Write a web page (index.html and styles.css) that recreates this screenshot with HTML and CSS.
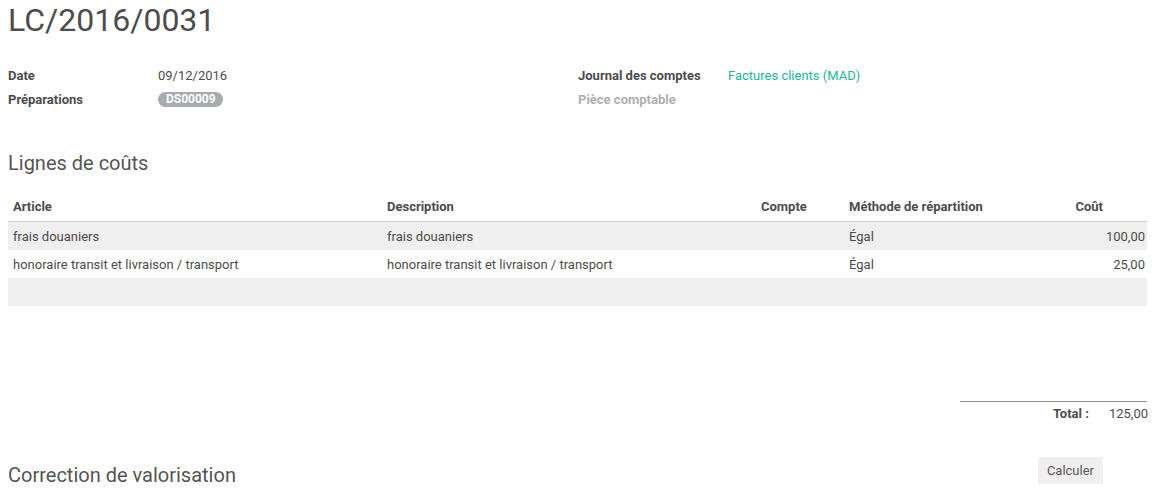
FILE: index.html
```html
<!DOCTYPE html>
<html>
<head>
<meta charset="utf-8">
<link rel="stylesheet" href="styles.css">
</head>
<body>
<div class="sheet">
  <h1 class="title">LC/2016/0031</h1>
  <div class="fields">
    <div class="group">
      <div class="field"><span class="label">Date</span><span class="value">09/12/2016</span></div>
      <div class="field"><span class="label">Préparations</span><span class="value"><span class="badge">DS00009</span></span></div>
    </div>
    <div class="group">
      <div class="field"><span class="label">Journal des comptes</span><span class="value link">Factures clients (MAD)</span></div>
      <div class="field"><span class="label muted">Pièce comptable</span><span class="value"></span></div>
    </div>
  </div>

  <h2 class="section">Lignes de coûts</h2>
  <table class="lines">
    <colgroup>
      <col class="c-article"><col class="c-desc"><col class="c-compte"><col class="c-meth"><col class="c-cout">
    </colgroup>
    <thead>
      <tr>
        <th>Article</th>
        <th>Description</th>
        <th class="th-compte">Compte</th>
        <th>Méthode de répartition</th>
        <th class="th-cout">Coût</th>
      </tr>
    </thead>
    <tbody>
      <tr class="odd">
        <td>frais douaniers</td>
        <td>frais douaniers</td>
        <td></td>
        <td>Égal</td>
        <td class="num">100,00</td>
      </tr>
      <tr>
        <td>honoraire transit et livraison / transport</td>
        <td>honoraire transit et livraison / transport</td>
        <td></td>
        <td>Égal</td>
        <td class="num">25,00</td>
      </tr>
      <tr class="odd empty">
        <td></td><td></td><td></td><td></td><td></td>
      </tr>
    </tbody>
  </table>

  <div class="totals">
    <div class="total-row"><span class="total-label">Total :</span><span class="total-value">125,00</span></div>
  </div>

  <div class="bottom">
    <h2 class="section">Correction de valorisation</h2>
    <button class="btn">Calculer</button>
  </div>
</div>
</body>
</html>
```
FILE: styles.css
```css
html, body {
  margin: 0;
  padding: 0;
  background: #fff;
}
body {
  font-family: Roboto, "Noto Sans", sans-serif;
  font-size: 13px;
  color: #4c4c4c;
  overflow: hidden;
}
.sheet {
  padding: 0 14px 0 8px;
}
.title {
  margin: 0;
  padding-top: 1px;
  font-size: 32px;
  font-weight: 400;
  line-height: 38px;
  color: #4c4c4c;
}
.fields {
  display: flex;
  margin-top: 24px;
}
.group {
  flex: 0 0 570px;
}
.field {
  display: flex;
  height: 24px;
  align-items: center;
}
.label {
  width: 150px;
  font-weight: 700;
  color: #4c4c4c;
}
.label.muted {
  color: #b0b0b0;
}
.value.link {
  color: #21b799;
}
.badge {
  display: inline-block;
  background: #a6abaf;
  color: #fff;
  font-weight: 700;
  font-size: 12px;
  line-height: 15px;
  padding: 0 7px 0 8px;
  border-radius: 8px;
}
.section {
  margin: 0;
  font-size: 20px;
  font-weight: 400;
  color: #555;
  line-height: 24px;
}
.fields + .section {
  margin-top: 40px;
}
.lines {
  width: 100%;
  margin-top: 17px;
  border-collapse: collapse;
  table-layout: fixed;
}
.c-article { width: 374px; }
.c-desc { width: 374px; }
.c-compte { width: 88px; }
.c-meth { width: 196px; }
.c-cout { width: auto; }
.lines th {
  text-align: left;
  font-weight: 700;
  padding: 0 5px;
  height: 29px;
  vertical-align: middle;
  border-bottom: 1px solid #cfcfcf;
  color: #4c4c4c;
}
.lines th.th-compte {
  text-align: right;
  padding-right: 38px;
}
.lines th.th-cout {
  text-align: right;
  padding-right: 44px;
}
.lines td {
  padding: 0 5px;
  height: 28px;
  vertical-align: middle;
  white-space: nowrap;
  color: #4c4c4c;
}
.lines tr.odd td {
  background: #eeefee;
}
.lines tr.empty td {
  height: 28px;
}
.lines td.num {
  text-align: right;
  padding-right: 2px;
}
.totals {
  display: flex;
  justify-content: flex-end;
  margin-top: 95px;
}
.total-row {
  width: 187px;
  border-top: 1px solid #8f8f8f;
  display: flex;
  justify-content: flex-end;
  align-items: center;
  height: 20px;
  padding-top: 1px;
}
.total-label {
  font-weight: 700;
  margin-right: 20px;
}
.total-value {
  margin-right: -1px;
}
.bottom {
  display: flex;
  justify-content: space-between;
  align-items: flex-end;
  margin-top: 34px;
  padding-right: 44px;
}
.bottom .section {
  margin-bottom: -2px;
}
.btn {
  font-family: Roboto, "Noto Sans", sans-serif;
  font-size: 13px;
  color: #5a5a5a;
  background: #f0eeee;
  border: none;
  border-radius: 0;
  height: 27px;
  padding: 0 9px;
  margin-bottom: 1px;
}
```
